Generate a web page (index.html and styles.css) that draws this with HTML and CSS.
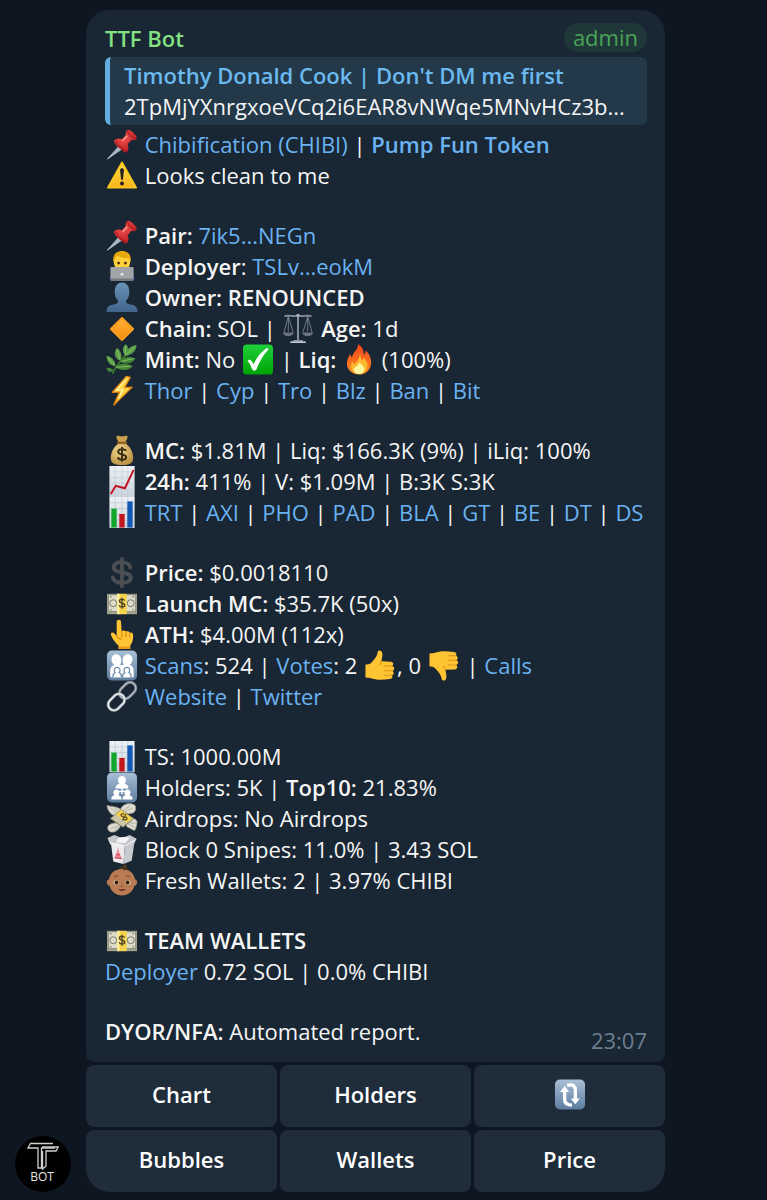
FILE: index.html
```html
<!DOCTYPE html>
<html lang="en">
<head>
	<meta charset="utf-8">
	<meta name="viewport" content="width=device-width, initial-scale=1">
	<title>TTF Bot</title>
	<link rel="stylesheet" href="styles.css">
</head>
<body>
	<svg class="sprite" aria-hidden="true">
		<defs>
			<linearGradient id="gKey" x1="0" y1="0" x2="0" y2="1"><stop offset="0" stop-color="#a9bfd6"/><stop offset="1" stop-color="#5d7d9f"/></linearGradient>
			<linearGradient id="gYellow" x1="0" y1="0" x2="0" y2="1"><stop offset="0" stop-color="#ffe04a"/><stop offset="1" stop-color="#f9b31c"/></linearGradient>
			<linearGradient id="gGreen" x1="0" y1="0" x2="0" y2="1"><stop offset="0" stop-color="#1fd03a"/><stop offset="1" stop-color="#00a304"/></linearGradient>
			<linearGradient id="gBust" x1="0" y1="0" x2="0" y2="1"><stop offset="0" stop-color="#6b93b8"/><stop offset="1" stop-color="#41648a"/></linearGradient>
			<linearGradient id="gOrange" x1="0" y1="0" x2="0" y2="1"><stop offset="0" stop-color="#ffb43a"/><stop offset="1" stop-color="#f58a0b"/></linearGradient>
			<linearGradient id="gPaper" x1="0" y1="0" x2="0" y2="1"><stop offset="0" stop-color="#eef2f6"/><stop offset="1" stop-color="#c9d2da"/></linearGradient>
			<linearGradient id="gFire" x1="0" y1="0" x2="0" y2="1"><stop offset="0" stop-color="#f2431d"/><stop offset="1" stop-color="#ff8d1e"/></linearGradient>
			<radialGradient id="gRed" cx=".4" cy=".3" r=".8"><stop offset="0" stop-color="#f4544f"/><stop offset="1" stop-color="#b3161d"/></radialGradient>
			<radialGradient id="gBag" cx=".4" cy=".35" r=".75"><stop offset="0" stop-color="#f3d990"/><stop offset="1" stop-color="#b58a3a"/></radialGradient>
		</defs>
		<symbol id="pin" viewBox="0 0 32 32">
			<path d="M1 31 12.500 18l3 3z" fill="#a9b6c0" stroke="#a9b6c0"/>
			<path d="M7.500 12.500c2-3 5.500-3 8.500-2l4-4.500c-.5-2 0-4 1.500-5 1-.7 3.500 0 6 2.500s4.500 5 3.500 6.500c-1 1.300-3 1.500-5 1l-4 4.500c1 3 1 6.500-1.500 9C16 23 9 17 7.500 12.500z" fill="url(#gRed)"/>
			<path d="M9.500 12.500c3 5 6 8 11 10.500M21.500 2c1 4 4.500 7 8.500 8" fill="none" stroke="#8f1117" stroke-width="1"/>
			<path d="m17 12 4-4.500" stroke="#ff9a94" stroke-width="1.500" stroke-linecap="round"/>
		</symbol>
		<symbol id="warn" viewBox="0 0 32 32">
			<path d="M16 2.500 30.500 28.500h-29z" fill="url(#gYellow)" stroke="#fbc61f" stroke-width="2" stroke-linejoin="round"/>
			<path d="M14 10.500c0-2.600 4-2.600 4 0l-1 9c-.2 1.500-1.800 1.500-2 0z" fill="#222"/>
			<circle cx="16" cy="24.300" r="2" fill="#222"/>
		</symbol>
		<symbol id="coder" viewBox="0 0 32 32">
			<path d="M3 30c0-6 4-9 13-9s13 3 13 9z" fill="#2a2b86"/>
			<path d="M7.500 11C7 4 11 .8 16 .8S25 4 24.500 11c-.3 6-4 10-8.500 10s-8.200-4-8.500-10z" fill="#ffd13b"/>
			<path d="M7 11C6 3 11 0 16 0s10 3 9 11l-2-4c-4 1-9 0-12-2-1 1-2 3-4 6z" fill="#e8a80c"/>
			<circle cx="12.500" cy="12.500" r="1.500" fill="#4a2f0a"/><circle cx="19.500" cy="12.500" r="1.500" fill="#4a2f0a"/>
			<rect x="4" y="16.500" width="24" height="14" rx="1.500" fill="#a2a5a8"/>
			<rect x="4" y="28.500" width="24" height="2.500" rx="1" fill="#76797c"/>
			<circle cx="16" cy="24" r="1.400" fill="#f2f2f2"/>
		</symbol>
		<symbol id="bust" viewBox="0 0 32 32">
			<path d="M0 31c0-5 2-6.500 6-7.500 4-.8 6-1.500 6-4-2.500-2.500-3.500-5-3.500-9.500C8.500 4 11.500.5 16 .5S23.500 4 23.500 10c0 4.500-1 7-3.500 9.500 0 2.500 2 3.200 6 4 4 1 6 2.500 6 7.500z" fill="url(#gBust)"/>
		</symbol>
		<symbol id="diamond" viewBox="0 0 32 32">
			<path d="M16 5 27.500 16.500 16 28 4.500 16.500z" fill="url(#gOrange)" stroke="#f99d20" stroke-width="2" stroke-linejoin="round"/>
		</symbol>
		<symbol id="scales" viewBox="0 0 32 32">
			<g fill="none" stroke="#87929c" stroke-width="1.200">
				<path d="M2 3.500c5-2 9 1 14-1 5 2 9-1 14 1" stroke-width="1.800"/>
				<path d="M16 2v26" stroke-width="2"/>
				<path d="M6 3.500 1.500 20M6 3.500 11 20M26 3.500 21 20M26 3.500 30.500 20M6 4v15M26 4v15" stroke-width=".8"/>
			</g>
			<path d="M.5 20h11c0 5-11 5-11 0zM20.500 20h11c0 5-11 5-11 0z" fill="#68737d"/>
			<path d="M11 28h10v1.500H11z" fill="#9aa5ae"/><path d="M8 29.300h16V31H8z" fill="#c4cdd4"/>
			<circle cx="16" cy="2.500" r="1.800" fill="#aab4bc"/>
		</symbol>
		<symbol id="herb" viewBox="0 0 32 32">
			<path d="M6 31c3-8 10-16 20-27" fill="none" stroke="#3c7a2c" stroke-width="1.600"/>
			<g fill="#5a9e46">
				<path d="M14 17C8 15 7 8 11 4c4 3 6 9 3 13z"/><path d="M19 11c-3-3-3-8 1-11 3 3 3 8-1 11z"/>
				<path d="M9 23C3 22 0 17 0 12c5 1 10 5 9 11z"/><path d="M19 12c0-5 5-10 12-11 0 6-5 11-12 11z"/>
			</g>
			<g fill="#438836">
				<path d="M14 18c3-5 10-6 16-3-3 5-10 7-16 3z"/><path d="M9 24c3-4 11-5 18-1-4 5-12 5-18 1z"/>
				<path d="M7 27c-3-3-5-3-7-2 1 4 4 5 7 2z"/>
			</g>
			<path d="m11 6 3 10M2 14l7 9M20 2l-1 9M29 3 19 12M28 15l-13 3M24 23l-14 1" stroke="#a1cd86" stroke-width=".7" fill="none"/>
		</symbol>
		<symbol id="bolt" viewBox="0 0 32 32">
			<path d="M20.500 1.500 6 18l7.500-.5L7.500 31 26.500 12.500l-8 .5 6-10.500z" fill="#ffd84a" stroke="#e88812" stroke-width="1.300" stroke-linejoin="round"/>
			<path d="M20 4.500 10 16l6.500-.7-4 9" fill="none" stroke="#fff3a8" stroke-width="1.200"/>
		</symbol>
		<symbol id="check" viewBox="0 0 32 32">
			<rect x=".5" y=".5" width="31" height="31" rx="4" fill="url(#gGreen)"/>
			<path d="M5.500 17.500c2-2 3.800-.5 6 4.500C14.500 15 18.500 9 25.500 4.500l.8.900C20.500 12 16.800 18.500 13.800 26.500c-1.500.8-2.600.6-3.400-.3C9.300 22.500 8 20 5.500 17.500z" fill="#fff" stroke="#fff"/>
		</symbol>
		<symbol id="fire" viewBox="0 0 32 32">
			<path d="M15 0c5 3 6 7 6 11 1.500-1 2-2.500 1.800-4.500C26.500 10 29 15 28.500 20c-.5 7-6 11.500-12.500 11.500S3.500 27 3.500 20.500c0-4 1.500-7 3.500-10.500.3 2 .8 3 2 4C9 8.500 15.500 6 15 0z" fill="url(#gFire)"/>
			<path d="M17 9c1 4 0 5 2.500 8 1-.8 1.500-1.800 1.500-3 3 4 4.500 7 3.500 10.500-1 4-4.500 6.500-8.500 6.500s-7.800-2.500-8.300-7c-.2-3 .8-4.500 1.300-6 1 1 1.300 2 2 3 3-3 6-6 6-12z" fill="#ffb92e"/>
			<path d="M16.500 19c3 3 5.500 4.500 5 7.500-.4 2.800-2.500 4.500-5.500 4.500s-5.500-2-5.500-4.800C10.500 24 15 23 16.500 19z" fill="#fff7a0"/>
		</symbol>
		<symbol id="bag" viewBox="0 0 32 32">
			<path d="M10.500 1c2-1 3 .8 5.500.3 2 .5 3.500-1.300 5.500-.3 1 2-1.500 5-2.300 7h-6.400C12 6 9.500 3 10.500 1z" fill="#cba24c"/>
			<path d="M12.500 8.500h7c5 3.500 8.500 10 8 16-.3 5-4 6.500-11.500 6.500S4.800 29.500 4.500 24.500c-.5-6 3-12.500 8-16z" fill="url(#gBag)"/>
			<path d="M11.500 8h9" stroke="#8b5d1c" stroke-width="2" stroke-linecap="round"/>
			<path d="M20 16.500c-1-2.500-8-2.500-8 .8 0 3.700 8.300 1.900 8.300 5.700 0 3.500-7.800 3.500-8.600 0M16 12.500v15" fill="none" stroke="#3c2f16" stroke-width="2"/>
		</symbol>
		<symbol id="rise" viewBox="0 0 32 32">
			<rect x="3" y="0" width="26" height="32" fill="url(#gPaper)"/>
			<path d="M3 6h26M3 12h26M3 18h26M3 24h26M9 0v32M16 0v32M22 0v32" stroke="#b9c6d2" stroke-width=".5"/>
			<path d="m4.500 29 5-8.500 9.500 2.500L28 4" fill="none" stroke="#c4121f" stroke-width="2"/>
		</symbol>
		<symbol id="bars" viewBox="0 0 32 32">
			<rect x="3" y="0" width="26" height="32" fill="url(#gPaper)"/>
			<path d="M3 6h26M3 12h26M3 18h26M3 24h26M9 0v32M16 0v32M22 0v32" stroke="#a9b8c8" stroke-width=".5"/>
			<path d="M5 12h5.500v19.500H5z" fill="#0fa62b"/><path d="M13.200 17.500h5.500v14h-5.500z" fill="#c3161c"/><path d="M21.500 4.500H27v27h-5.500z" fill="#1258b4"/>
		</symbol>
		<symbol id="dollar" viewBox="0 0 32 32">
			<path d="M24.500 11c-1-7.500-17-7.500-17-.5 0 8 17.500 3 17.500 11 0 7-17.500 7-18.500-.5M16 2v28.500" fill="none" stroke="#4b4f53" stroke-width="4" stroke-linecap="round"/>
		</symbol>
		<symbol id="cash" viewBox="0 0 32 32">
			<rect x=".5" y="6" width="31" height="21" fill="#a5a68f"/>
			<rect x="1.800" y="7" width="28.400" height="17.500" fill="#dcdcc8" stroke="#76786a" stroke-width=".8"/>
			<circle cx="7" cy="15.700" r="3.600" fill="none" stroke="#76786a"/><circle cx="25" cy="15.700" r="3.600" fill="none" stroke="#76786a"/>
			<path d="M3.500 9h2M3.500 22.500h2M26.500 9h2M26.500 22.500h2" stroke="#76786a"/>
			<path d="M11 6h10v21H11z" fill="#f6d34c"/><path d="M11 6h2.500v21H11z" fill="#fff0a0"/>
			<path d="M18.700 13c-1-2-5.400-2-5.400.5 0 3 5.600 1.500 5.600 4.400 0 2.500-5 2.500-5.900 0M16 10v11.500" fill="none" stroke="#4e452d" stroke-width="1.400"/>
		</symbol>
		<symbol id="point" viewBox="0 0 32 32">
			<path d="M10.500 3c0-3 4.500-3 4.500 0l.6 9.500C17 11.500 19 11.500 20 13c1.700-1 3.500-.3 4 1.200 2-.6 3.500.6 3.500 2.500 0 5.500-1 8-3 10.300V31H12.500v-3.500C10 25.500 5.500 20 4.500 16c-.3-2 2-2.800 3.500-1.200l2.500 2.700z" fill="#ffc433"/>
			<path d="m15.600 12.500.3 6M20 13v5M24 14.500v4M10.600 17.500c1 2 2.500 3 4.500 3.500" fill="none" stroke="#d58a14" stroke-width="1.100" stroke-linecap="round"/>
			<path d="M12.500 28.500h12V31h-12z" fill="#e99b1c"/>
		</symbol>
		<symbol id="family" viewBox="0 0 32 32">
			<rect x=".5" y=".5" width="31" height="31" rx="5" fill="url(#gKey)"/>
			<path d="M4 28c-.5-9 0-11 4-12.500C3.500 12 4.500 4.500 10 4.500S16.500 12 14 15.500h4C15.500 12 16.500 4.500 22 4.500s6.500 7.500 2 11c4 1.500 4.500 3.500 4 12.500z" fill="#fff"/>
			<g fill="#fff" stroke="#6787a8" stroke-width="1.200">
				<path d="M6.500 28c0-3 .8-4 2.500-4.700-2-2.500-.5-5.300 2-5.300s4 2.800 2 5.300c1.700.7 2.500 1.700 2.500 4.700"/>
				<path d="M16.500 28c0-3 .8-4 2.500-4.700-2-2.500-.5-5.300 2-5.300s4 2.800 2 5.300c1.700.7 2.500 1.700 2.500 4.700"/>
			</g>
		</symbol>
		<symbol id="holders" viewBox="0 0 32 32">
			<rect x=".5" y=".5" width="31" height="31" rx="5" fill="url(#gKey)"/>
			<path d="M9.500 17c0-3.500 1.500-4 4-4.800-3-3.200-1.500-8.200 2.500-8.200s5.500 5 2.500 8.200c2.500.8 4 1.300 4 4.800z" fill="#fff"/>
			<path d="M16 16v7M9.500 20h13" stroke="#fff" stroke-width="1.500" fill="none"/>
			<path d="M5 28.500c0-3.500 1-4 3.200-4.600-2.300-2.600-.8-5.900 2-5.900s4.300 3.300 2 5.900c2.200.6 3.300 1.100 3.300 4.600zM16.500 28.500c0-3.500 1-4 3.200-4.600-2.300-2.600-.8-5.900 2-5.900s4.300 3.300 2 5.900c2.200.6 3.300 1.100 3.300 4.600z" fill="#fff"/>
		</symbol>
		<symbol id="link" viewBox="0 0 32 32">
			<g fill="none">
				<rect x="-9.500" y="-6" width="19" height="12" rx="6" transform="translate(21.800 9.800) rotate(-45)" stroke="#7d868e" stroke-width="3"/>
				<rect x="-9.500" y="-6" width="19" height="12" rx="6" transform="translate(21.800 9.800) rotate(-45)" stroke="#b7bec4" stroke-width="1.200"/>
				<rect x="-9.500" y="-6" width="19" height="12" rx="6" transform="translate(10.200 21.800) rotate(-45)" stroke="#a2abb2" stroke-width="3"/>
				<rect x="-9.500" y="-6" width="19" height="12" rx="6" transform="translate(10.200 21.800) rotate(-45)" stroke="#eef1f3" stroke-width="1.400"/>
			</g>
		</symbol>
		<symbol id="thumb" viewBox="0 0 32 32">
			<path d="M1 15c3 0 5-.5 7-3 2.500-3 5-5.500 5.500-9.500C14-1 18.500 0 18.500 4.500c0 3-.8 4.500-1 7L27 12c3 .2 3.500 3.500 1.500 4.500 2.800.8 2.800 4.200.3 5 2 1 1.700 4-.6 4.600 1.300 1.500.5 3.900-2 3.900-6 .8-11 1.200-15 .3C7 29.500 5 28.500 1 28.500z" fill="#ffc433"/>
			<path d="M20 16.500h8.500M20.500 21.500h8.300M20.500 26.100h7.700M17.500 11.500c-.3 1.500-1 2.500-2 3.500" fill="none" stroke="#dc9418" stroke-width="1.100" stroke-linecap="round"/>
		</symbol>
		<symbol id="thumbdown" viewBox="0 0 32 32">
			<use href="#thumb" width="32" height="32" transform="matrix(1 0 0 -1 0 32)"/>
		</symbol>
		<symbol id="wings" viewBox="0 0 32 32">
			<g fill="#dedbd0" stroke="#9a9789" stroke-width=".8">
				<path d="M11 14C5 13 1 8 .5 2.500 5 4 9 3 14 6l3 5z"/><path d="M14 7c3-6 9-8 15-5 2 2 1.500 6-1 8-3 1.500-7 1-10 1z"/>
				<path d="M12 21c-4-1-8 0-10.500 3-1 3 1 6 4 6 4 .5 8-3 9-7z"/><path d="M19 17c5-3 10-2 12.500 2 0 4-1 7-2.500 9.500-3-1-5-3-8-4z"/>
			</g>
			<path d="m4 5 8 6M8 5l6 4M27 5l-8 4M24 3l-7 5M4 27l8-4M8 28l5-4M29 25l-8-4M30 21l-9-1" stroke="#a5a294" stroke-width=".7"/>
			<path d="m4 16 11-9 13 9-11 9z" fill="#c9c7a8" stroke="#7c7a62"/>
			<path d="m9.500 11.500 5.500-4.500 12 9-6 4.500z" fill="#f1d04b"/>
			<path d="M18 11.500c-2-1-4 .5-2.500 2s4.500 0 5.500 1.700-1.500 3-3.500 1.500M20 11l-3.500 7" fill="none" stroke="#544a24" stroke-width="1.200"/>
		</symbol>
		<symbol id="takeout" viewBox="0 0 32 32">
			<path d="m1 4 7-3 8 3 8-3 7 4-3 6H4z" fill="#c5c7ca"/>
			<path d="M4.500 8.500 19 11l-1.500 20L7 28.500z" fill="#ececee"/><path d="M19 11 29 7.500l-3 20L17.500 31z" fill="#c9cacf"/>
			<path d="M1 4 4.500 9 19 11.500 31.500 5 28 8 19 12.500 4 9.500z" fill="#fafafa"/>
			<path d="M12 4.500c4-2 9-2 12 0l-5 5-9-1z" fill="#f5f5f6"/>
			<path d="m11.800 14 1.200 4.500 2.300 5.500.3 1.800-7.200-1.200.3-1.600 2-4.500z" fill="#e98793"/>
			<path d="M8.500 24.500l7 1M10 21l4 .7" stroke="#d9485c" stroke-width="1.300"/>
		</symbol>
		<symbol id="baby" viewBox="0 0 32 32">
			<path d="M2.500 15c-3 0-3 6 .7 6.500C5 28 10 31.500 16 31.500S27 28 28.800 21.500c3.700-.5 3.700-6.500.7-6.500C28.500 8 23 4 16 4S3.500 8 2.500 15z" fill="#b97b54"/>
			<path d="M18 5c4-1 3-5-1-4.500C20 1.500 18 4 14 3" fill="none" stroke="#5f3a1d" stroke-width="1.500" stroke-linecap="round"/>
			<ellipse cx="10" cy="18" rx="2.800" ry="2.300" fill="#efd3ac"/><ellipse cx="22" cy="18" rx="2.800" ry="2.300" fill="#efd3ac"/>
			<circle cx="10.300" cy="18" r="2" fill="#33190d"/><circle cx="21.700" cy="18" r="2" fill="#33190d"/>
			<path d="M7.500 12.500c1.500-1.200 3-1.300 4.500-.8M20 11.700c1.500-.5 3-.4 4.500.8" fill="none" stroke="#784526"/>
			<path d="M12 25c2.500 2.500 5.500 2.500 8 0z" fill="#6a2a20"/><path d="M14.800 21.500c.8.6 1.600.6 2.400 0" fill="none" stroke="#7c4528"/>
		</symbol>
		<symbol id="reload" viewBox="0 0 32 32">
			<rect x=".5" y=".5" width="31" height="31" rx="5" fill="url(#gKey)"/>
			<path d="M10.500 12v9c0 4 3 6 7.500 6M13 6.500c6-1.500 8.500 1 8.500 5V21" fill="none" stroke="#fff" stroke-width="3.400"/>
			<path d="m10.500 7 4.700 6.500H5.800zM21.500 26l-4.700-6h9.400z" fill="#fff"/>
		</symbol>
	</svg>

	<main class="chat">
		<svg class="avatar" viewBox="0 0 56 56" role="img" aria-label="TTF Bot">
			<circle cx="28" cy="28" r="28" fill="#000"/>
			<g fill="none" stroke="#cfcfcf" stroke-width="1.300">
				<path d="M38 7.500H15.500L13 12h10v20h3.500V12H40"/>
				<path d="M27 11h16.200L41 15H31v15l-3.500 3V15"/>
			</g>
			<text class="avatar-text" x="27" y="45" text-anchor="middle">BOT</text>
		</svg>

		<div class="message">
			<article class="bubble">
				<header class="head">
					<span class="sender">TTF Bot</span>
					<span class="badge">admin</span>
				</header>
				<blockquote class="quote">
					<b class="quote-name">Timothy Donald Cook | Don't DM me first</b>
					<span class="quote-text">2TpMjYXnrgxoeVCq2i6EAR8vNWqe5MNvHCz3b...</span>
				</blockquote>

				<div class="report">
					<p>
						<svg class="emoji"><use href="#pin"/></svg> <a href="#">Chibification (CHIBI)</a> | <a href="#"><b>Pump Fun Token</b></a><br>
						<svg class="emoji"><use href="#warn"/></svg> Looks clean to me
					</p>
					<p>
						<svg class="emoji"><use href="#pin"/></svg> <b>Pair:</b> <a href="#">7ik5...NEGn</a><br>
						<svg class="emoji"><use href="#coder"/></svg> <b>Deployer</b>: <a href="#">TSLv...eokM</a><br>
						<svg class="emoji"><use href="#bust"/></svg> <b>Owner: RENOUNCED</b><br>
						<svg class="emoji"><use href="#diamond"/></svg> <b>Chain:</b> SOL | <svg class="emoji"><use href="#scales"/></svg> <b>Age:</b> 1d<br>
						<svg class="emoji"><use href="#herb"/></svg> <b>Mint:</b> No <svg class="emoji"><use href="#check"/></svg> | <b>Liq:</b> <svg class="emoji"><use href="#fire"/></svg> (100%)<br>
						<svg class="emoji"><use href="#bolt"/></svg> <a href="#">Thor</a> | <a href="#">Cyp</a> | <a href="#">Tro</a> | <a href="#">Blz</a> | <a href="#">Ban</a> | <a href="#">Bit</a>
					</p>
					<p>
						<svg class="emoji"><use href="#bag"/></svg> <b>MC:</b> $1.81M | Liq: $166.3K (9%) | iLiq: 100%<br>
						<svg class="emoji"><use href="#rise"/></svg> <b>24h:</b> 411% | V: $1.09M | B:3K S:3K<br>
						<svg class="emoji"><use href="#bars"/></svg> <a href="#">TRT</a> | <a href="#">AXI</a> | <a href="#">PHO</a> | <a href="#">PAD</a> | <a href="#">BLA</a> | <a href="#">GT</a> | <a href="#">BE</a> | <a href="#">DT</a> | <a href="#">DS</a>
					</p>
					<p>
						<svg class="emoji"><use href="#dollar"/></svg> <b>Price:</b> $0.0018110<br>
						<svg class="emoji"><use href="#cash"/></svg> <b>Launch MC:</b> $35.7K (50x)<br>
						<svg class="emoji"><use href="#point"/></svg> <b>ATH:</b> $4.00M (112x)<br>
						<svg class="emoji"><use href="#family"/></svg> <a href="#">Scans</a>: 524 | <a href="#">Votes</a>: 2 <svg class="emoji"><use href="#thumb"/></svg>, 0 <svg class="emoji"><use href="#thumbdown"/></svg> | <a href="#">Calls</a><br>
						<svg class="emoji"><use href="#link"/></svg> <a href="#">Website</a> | <a href="#">Twitter</a>
					</p>
					<p>
						<svg class="emoji"><use href="#bars"/></svg> TS: 1000.00M<br>
						<svg class="emoji"><use href="#holders"/></svg> Holders: 5K | <b>Top10:</b> 21.83%<br>
						<svg class="emoji"><use href="#wings"/></svg> Airdrops: No Airdrops<br>
						<svg class="emoji"><use href="#takeout"/></svg> Block 0 Snipes: 11.0% | 3.43 SOL<br>
						<svg class="emoji"><use href="#baby"/></svg> Fresh Wallets: 2 | 3.97% CHIBI
					</p>
					<p>
						<svg class="emoji"><use href="#cash"/></svg> <b>TEAM WALLETS</b><br>
						<a href="#">Deployer</a> 0.72 SOL | 0.0% CHIBI
					</p>
					<footer class="foot">
						<p><b>DYOR/NFA:</b> Automated report.</p>
						<time class="time">23:07</time>
					</footer>
				</div>
			</article>

			<div class="keyboard">
				<button type="button">Chart</button>
				<button type="button">Holders</button>
				<button type="button" aria-label="Refresh"><svg class="emoji"><use href="#reload"/></svg></button>
				<button type="button">Bubbles</button>
				<button type="button">Wallets</button>
				<button type="button">Price</button>
			</div>
		</div>
	</main>
</body>
</html>
```
FILE: styles.css
```css
* { box-sizing: border-box; }
body {
	margin: 0;
	background-color: #0e1621;
	color: #f5f5f5;
	font-family: "Open Sans", "Noto Sans", sans-serif;
	font-size: 22px;
	line-height: 31px;
}
p, blockquote { margin: 0; }
b { font-weight: 600; }
a {
	color: #6ab2f2;
	text-decoration: none;
}
a:hover { text-decoration: underline; }

.sprite {
	position: absolute;
	width: 0;
	height: 0;
}

.chat {
	display: flex;
	align-items: flex-end;
	gap: 15px;
	padding: 10px 102px 8px 15px;
}
.avatar {
	flex: none;
	width: 56px;
	height: 56px;
}
.avatar-text {
	fill: #e6e6e6;
	font-size: 12px;
}
.message {
	flex: 1;
	min-width: 0;
}

/* message bubble */
.bubble {
	padding: 13px 18px 15px 19px;
	background-color: #192633;
	border-radius: 24px 24px 8px 8px;
}
.head {
	display: flex;
	justify-content: space-between;
	align-items: flex-start;
	margin-bottom: 3px;
}
.sender {
	color: #84e083;
	font-weight: 600;
}
.badge {
	padding: 0 9px 1px;
	background-color: #1f3739;
	border-radius: 15px;
	color: #4aa356;
	line-height: 28px;
}
.quote {
	margin-bottom: 4px;
	padding: 3px 12px 3px 14px;
	background-color: #233849;
	border-left: 5px solid #62aee0;
	border-radius: 6px;
	white-space: nowrap;
	overflow: hidden;
}
.quote-name {
	display: block;
	color: #6ab9ef;
}
.quote-text { display: block; }

.report {
	display: flex;
	flex-direction: column;
	gap: 29px;
}
.emoji {
	width: 34px;
	height: 31px;
	vertical-align: top;
}
.foot {
	display: flex;
	justify-content: space-between;
}
.time {
	margin-bottom: -9px;
	align-self: flex-end;
	color: #6d7f8f;
}

/* inline keyboard */
.keyboard {
	display: grid;
	grid-template-columns: repeat(3, 1fr);
	gap: 3px;
	margin-top: 3px;
}
.keyboard button {
	height: 62px;
	padding: 0 0 4px;
	border: 0;
	border-radius: 8px;
	background-color: #1f2c3a;
	color: #fff;
	font: inherit;
	font-weight: 600;
	cursor: pointer;
}
.keyboard button:hover { background-color: #273747; }
.keyboard button:nth-child(4) { border-bottom-left-radius: 24px; }
.keyboard button:nth-child(6) { border-bottom-right-radius: 24px; }
```
